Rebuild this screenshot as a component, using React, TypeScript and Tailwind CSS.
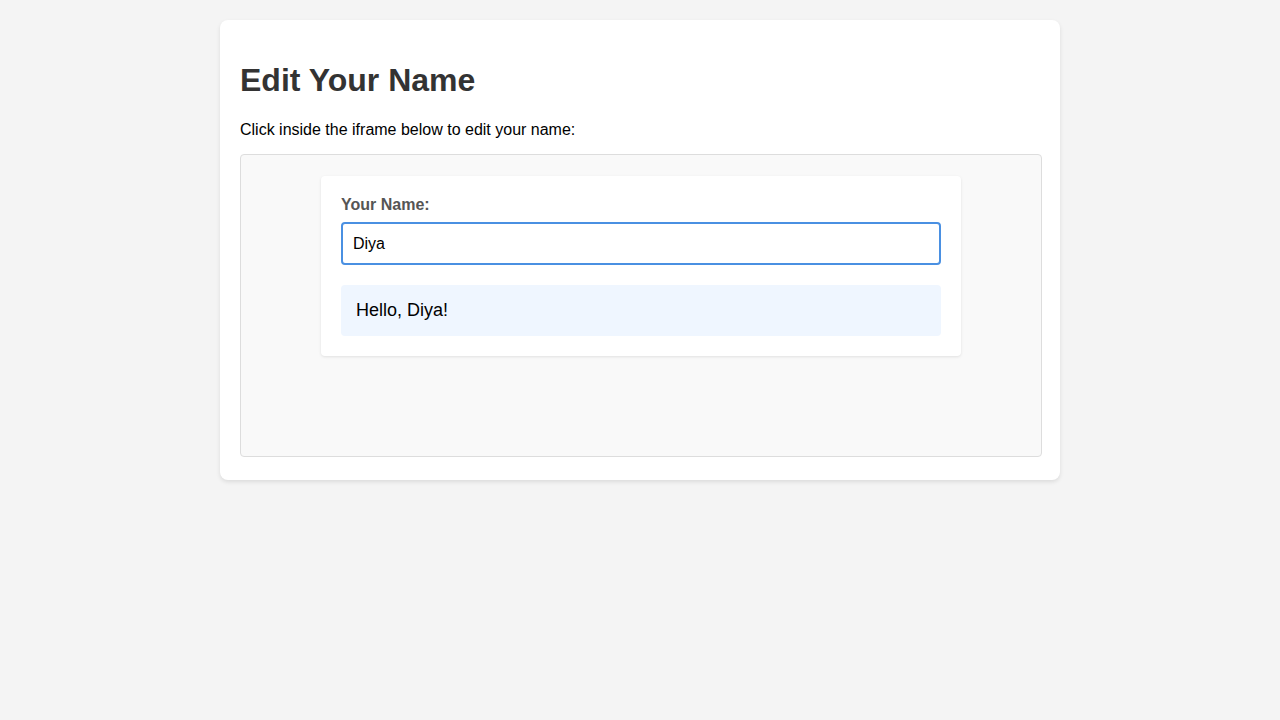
import React from 'react';

export default function App() {
  const [name, setName] = React.useState('Diya');

  return (
    <div className="min-h-screen bg-[#f4f4f4] pt-5 font-['Liberation_Sans',Arial,sans-serif] text-black">
      <div className="mx-auto w-[840px] rounded-lg bg-white px-5 pt-5 pb-[23px] shadow-[0_2px_4px_rgba(0,0,0,0.1)]">
        <h1 className="mt-[22px] mb-[21px] text-[32px] font-bold leading-[37px] text-[#333]">Edit Your Name</h1>
        <p className="mb-[14px] text-base leading-[20px]">Click inside the iframe below to edit your name:</p>

        <div className="h-[303px] w-[802px] rounded border border-[#ddd] bg-[#f9f9f9] pt-[21px]">
          <div className="mx-auto w-[640px] rounded bg-white p-5 shadow-[0_1px_3px_rgba(0,0,0,0.1)]">
            <label className="mb-2 block text-base font-bold leading-[18px] text-[#555]">Your Name:</label>
            <input
              value={name}
              onChange={(e) => setName(e.target.value)}
              className="block h-[43px] w-full rounded border-2 border-[#4a90e2] px-[10px] text-base text-black outline-none"
            />
            <div className="mt-5 rounded bg-[#eff6ff] p-[15px] text-lg leading-[21px]">
              Hello, {name}!
            </div>
          </div>
        </div>
      </div>
    </div>
  );
}
